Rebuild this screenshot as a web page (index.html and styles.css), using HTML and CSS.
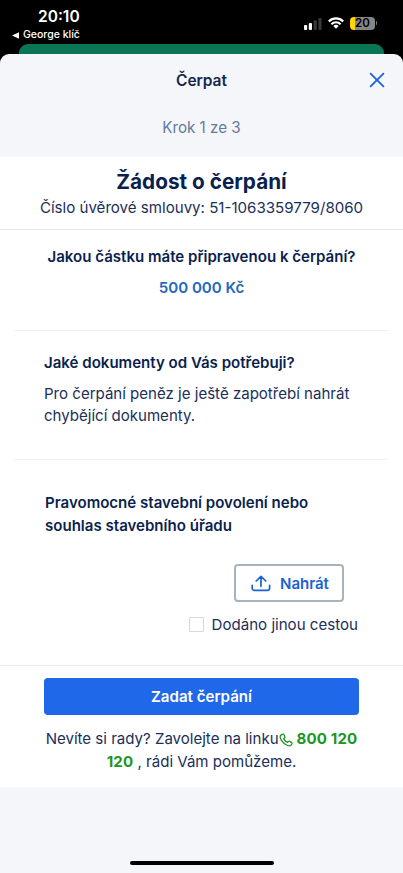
FILE: index.html
```
<!DOCTYPE html>
<html lang="cs">
<head>
<meta charset="utf-8">
<title>Čerpat</title>
<link rel="stylesheet" href="styles.css">
</head>
<body>
<div class="phone">
  <header class="status">
    <div class="status-left">
      <div class="clock">20:10</div>
      <div class="back"><svg width="7" height="7" viewBox="0 0 7 7"><path d="M0 3.5 7 .3v6.4z" fill="#fff"/></svg><span>George klíč</span></div>
    </div>
    <div class="status-right">
      <svg width="19" height="13" viewBox="0 0 19 13"><rect x="1" y="8" width="3.2" height="5" rx="1" fill="#fff"/><rect x="5.800" y="6" width="3.2" height="7" rx="1" fill="#fff"/><rect x="10.600" y="3.3" width="3.2" height="9.7" rx="1" fill="#39393b"/><rect x="15.400" y="1" width="3.2" height="12" rx="1" fill="#39393b"/></svg>
      <svg class="wifi" width="16" height="12" viewBox="0 0 16 12"><g fill="none" stroke="#fff" stroke-width="2.1"><path d="M.8 4.4a10.2 10.2 0 0 1 14.4 0"/><path d="M3.4 7.2a6.5 6.5 0 0 1 9.2 0"/></g><path d="M5.4 9.1a3.7 3.7 0 0 1 5.2 0L8 11.8z" fill="#fff"/></svg>
      <div class="battery"><span>20</span></div>
      <i class="battery-tip"></i>
    </div>
  </header>
  <div class="card-behind"></div>
  <main class="sheet">
    <div class="nav">
      <span></span>
      <h1>Čerpat</h1>
      <svg width="16" height="16" viewBox="0 0 16 16"><path d="M1.6 1.6 14.4 14.4M14.4 1.6 1.6 14.4" stroke="#1b62d2" stroke-width="1.8" stroke-linecap="round"/></svg>
    </div>
    <div class="step"><span>Krok 1 ze 3</span></div>
    <div class="content">
      <section class="intro">
        <h2>Žádost o čerpání</h2>
        <p>Číslo úvěrové smlouvy: 51-1063359779/8060</p>
      </section>
      <section class="amount">
        <h3>Jakou částku máte připravenou k čerpání?</h3>
        <p class="sum">500 000 Kč</p>
      </section>
      <section class="documents">
        <h3>Jaké dokumenty od Vás potřebuji?</h3>
        <p>Pro čerpání peněz je ještě zapotřebí nahrát<br>chybějící dokumenty.</p>
      </section>
      <section class="upload">
        <h3>Pravomocné stavební povolení nebo<br>souhlas stavebního úřadu</h3>
        <div class="upload-btn">
          <svg width="20" height="17" viewBox="0 0 20 17"><g fill="none" stroke="#1b62d2" stroke-width="1.7" stroke-linecap="round" stroke-linejoin="round"><path d="M1.2 10.3v2.9a2.2 2.2 0 0 0 2.2 2.2h13a2.2 2.2 0 0 0 2.2-2.2v-2.900"/><path d="M10 11.3V1.7M5.2 6 10 1.4 14.8 6"/></g></svg>
          <span>Nahrát</span>
        </div>
        <div class="check"><i></i><span>Dodáno jinou cestou</span></div>
      </section>
      <section class="actions">
        <div class="submit">Zadat čerpání</div>
        <p class="help">Nevíte si rady? Zavolejte na linku<svg width="14" height="14" viewBox="0 0 14 14"><path d="M3.7 1.2 1.8 2.2C.8 3 1.1 5 2.5 7.3s3.700 4.400 6.100 5.200c1.600.5 2.800.4 3.500-.4l.8-1.300c.2-.5.1-.9-.3-1.200l-2-1.300c-.5-.3-.9-.2-1.200.1l-.8.9C7.200 9 5.500 7.300 4.700 5.600l.9-.9c.3-.3.4-.7.2-1.100L4.900 1.500c-.2-.5-.7-.6-1.200-.3z" fill="none" stroke="#1a9622" stroke-width="1.300" stroke-linejoin="round"/></svg><b>800 120</b><br><b>120</b> , rádi Vám pomůžeme.</p>
      </section>
    </div>
    <div class="home"></div>
  </main>
</div>
</body>
</html>
```
FILE: styles.css
```
* { box-sizing: border-box; }
body, h1, h2, h3, p { margin: 0; }
body { background: #000; font-family: Inter, "Liberation Sans", sans-serif; color: #1b2f58; }
svg { display: block; flex: none; }
.phone { width: 403px; height: 873px; overflow: hidden; display: flex; flex-direction: column; background: #000; white-space: nowrap; }
.status { height: 44px; display: flex; justify-content: space-between; color: #fff; }
.status-left { padding: 8px 0 0 12px; }
.clock { padding-left: 26px; font-size: 15.500px; font-weight: 600; line-height: 18px; }
.back { display: flex; align-items: center; gap: 4px; font-size: 10.500px; font-weight: 500; line-height: 18px; }
.status-right { display: flex; align-items: center; height: 14px; margin: 16px 26px 0 0; }
.wifi { margin-left: 6px; }
.battery { display: flex; align-items: center; justify-content: center; width: 25px; height: 13px; margin-left: 6px; border-radius: 4px; background: linear-gradient(90deg, #ffd60a 5px, #858585 5px); color: #000; font-size: 11.500px; font-weight: 600; }
.battery-tip { width: 1px; height: 4px; margin-left: 1px; background: #777; border-radius: 0 1px 1px 0; }
.card-behind { height: 10px; margin: 0 19px; flex: none; background: #0b7656; border-radius: 9px 9px 0 0; }
.sheet { flex: 1; display: flex; flex-direction: column; background: #f4f6fa; border-radius: 9px 9px 0 0; }
.nav { display: grid; grid-template-columns: 1fr auto 1fr; align-items: center; height: 52px; padding: 0 18px; }
.nav svg { justify-self: end; }
h1 { font-size: 15.500px; font-weight: 600; letter-spacing: -.05px; color: #14284f; }
.step { height: 51px; padding-top: 12px; text-align: center; font-size: 15.200px; line-height: 20px; color: #667b98; }
.content { height: 630px; background: #fff; }
.intro { height: 73px; padding-top: 11px; text-align: center; border-bottom: 1px solid #e3e6ea; }
h2 { font-size: 20.750px; line-height: 28px; font-weight: 700; color: #0b1f4f; }
.intro p { font-size: 15.100px; line-height: 23px; }
h3 { font-size: 15.050px; line-height: 22.500px; font-weight: 600; color: #0b1f4f; }
.amount { height: 101px; margin: 0 15px; padding-top: 16px; text-align: center; border-bottom: 1px solid #eceef1; }
.sum { padding-top: 8px; font-size: 15.050px; line-height: 22px; font-weight: 600; color: #2468bd; }
.documents { height: 129px; margin: 0 15px; padding: 21px 0 0 29px; border-bottom: 1px solid #eceef1; }
.documents p { padding-top: 8px; font-size: 15.050px; line-height: 22.500px; }
.upload { height: 206px; padding: 32px 45px 0; border-bottom: 1px solid #e3edf1; }
.upload-btn { display: flex; align-items: center; gap: 9px; width: 110px; height: 38px; margin: 27px 14px 0 auto; padding-left: 15px; border: 2px solid #a7b3be; border-radius: 4px; font-size: 15px; font-weight: 600; color: #1b62d2; }
.check { display: flex; align-items: center; justify-content: flex-end; gap: 8px; height: 22px; margin-top: 11px; font-size: 15.100px; }
.check i { width: 15px; height: 15px; border: 1px solid #d4d7dc; border-radius: 1px; }
.actions { padding: 12px 44px 0; }
.submit { height: 37px; display: flex; align-items: center; justify-content: center; border-radius: 4px; background: #1f68e9; color: #fff; font-size: 15.100px; font-weight: 600; }
.help { padding-top: 13px; text-align: center; font-size: 15.050px; line-height: 22.500px; }
.help svg { display: inline-block; vertical-align: -3px; margin: 0 4px 0 0; }
.help b { color: #1a9622; font-weight: 700; letter-spacing: .15px; }
.home { width: 144px; height: 4px; margin: 74px auto 0; border-radius: 2px; background: #000; }
```
